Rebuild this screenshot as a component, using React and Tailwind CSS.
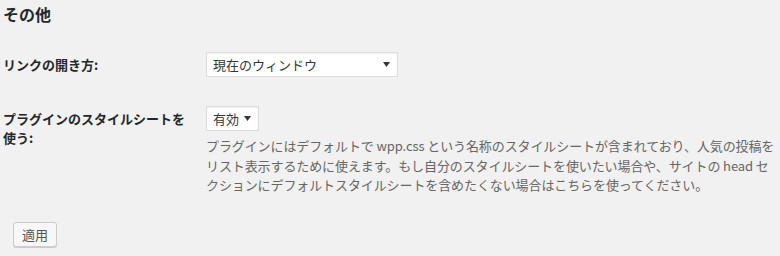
const FONT = '"Noto Sans CJK JP", "Noto Sans", sans-serif';

const Arrow = () => (
    <svg width="7" height="5" viewBox="0 0 7 5" className="shrink-0">
        <path d="M0 0 H7 L3.5 5 Z" fill="#32373c" />
    </svg>
);

const FakeSelect = ({ value, width }) => (
    <div
        className="flex items-center justify-between h-[25px] bg-white border border-[#ddd] shadow-[inset_0_1px_2px_rgba(0,0,0,0.07)] pl-[6px] pr-[7px] text-[13px] text-[#32373c]"
        style={{ width }}
    >
        <span>{value}</span>
        <Arrow />
    </div>
);

export default function App() {
    return (
        <div className="w-[780px] h-[256px] bg-[#f1f1f1] overflow-hidden" style={{ fontFamily: FONT }}>
            <h2 className="pl-[3px] pt-[4px] text-[16px] leading-[20px] font-bold text-[#23282d]">その他</h2>

            <div className="flex pl-[3px] mt-[28px]">
                <div className="w-[203px] pt-[3px] text-[13px] leading-[20px] font-bold text-[#23282d]">リンクの開き方:</div>
                <FakeSelect value="現在のウィンドウ" width={192} />
            </div>

            <div className="flex pl-[3px] mt-[29px]">
                <div className="w-[203px] pt-[3px] pr-[14px] text-[13px] leading-[19px] font-bold text-[#23282d]">
                    プラグインのスタイルシートを使う:
                </div>
                <div className="flex flex-col">
                    <FakeSelect value="有効" width={53} />
                    <p className="mt-[5px] w-[571px] whitespace-nowrap text-[13px] leading-[19.5px] text-[#666] tracking-[-0.1px]">
                        プラグインにはデフォルトで wpp.css という名称のスタイルシートが含まれており、人気の投稿を
                        <br />
                        リスト表示するために使えます。もし自分のスタイルシートを使いたい場合や、サイトの head セ
                        <br />
                        クションにデフォルトスタイルシートを含めたくない場合はこちらを使ってください。
                    </p>
                </div>
            </div>

            <div className="pl-[13px] mt-[26px]">
                <button className="w-[44px] h-[25px] bg-[#f7f7f7] border border-[#ccc] rounded-[3px] shadow-[0_1px_0_#ccc] text-[13px] text-[#555]">
                    適用
                </button>
            </div>
        </div>
    );
}
